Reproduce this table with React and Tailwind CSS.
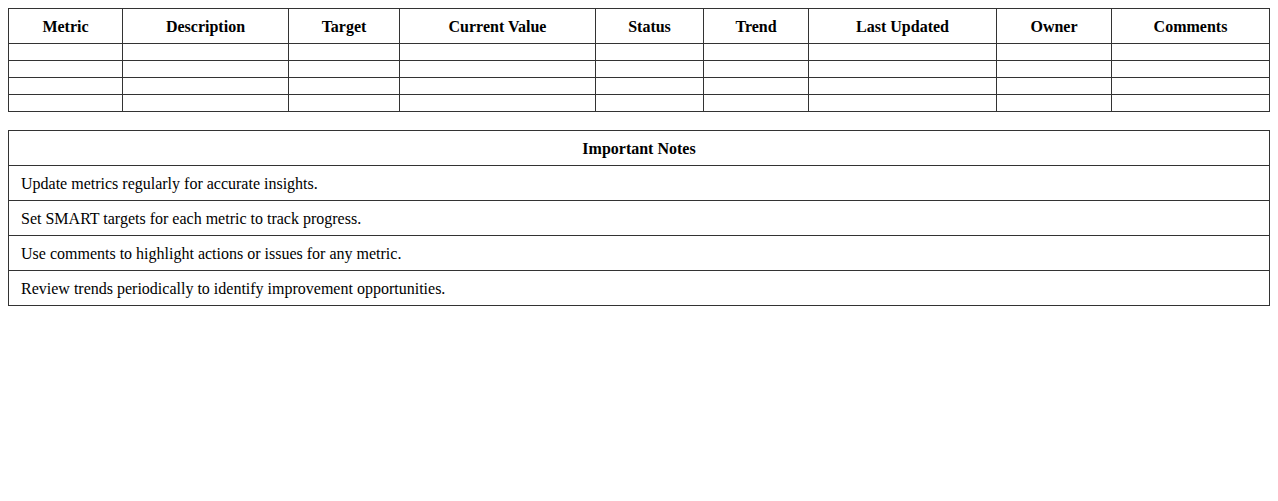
export default function App() {
  const cols = [
    ["Metric", "w-[114px]"],
    ["Description", "w-[166px]"],
    ["Target", "w-[111px]"],
    ["Current Value", "w-[196px]"],
    ["Status", "w-[108px]"],
    ["Trend", "w-[105px]"],
    ["Last Updated", "w-[188px]"],
    ["Owner", "w-[115px]"],
    ["Comments", "w-[158px]"],
  ];
  const notes = [
    "Update metrics regularly for accurate insights.",
    "Set SMART targets for each metric to track progress.",
    "Use comments to highlight actions or issues for any metric.",
    "Review trends periodically to identify improvement opportunities.",
  ];
  return (
    <div className="p-2 bg-white text-black text-[16px] leading-[18px] font-['Liberation_Serif','Times_New_Roman',serif]">
      <table className="w-full border-collapse table-fixed">
        <thead>
          <tr>
            {cols.map(([c, w]) => (
              <th key={c} className={`${w} border border-[#333] px-3 pt-[9px] pb-[7px] font-bold text-center`}>{c}</th>
            ))}
          </tr>
        </thead>
        <tbody>
          {[0, 1, 2, 3].map((r) => (
            <tr key={r}>
              {cols.map(([c]) => (
                <td key={c} className="border border-[#333] px-3 py-2"></td>
              ))}
            </tr>
          ))}
        </tbody>
      </table>
      <table className="w-full border-collapse mt-[18px]">
        <thead>
          <tr>
            <th className="border border-[#333] px-3 pt-[9px] pb-[7px] font-bold text-center">Important Notes</th>
          </tr>
        </thead>
        <tbody>
          {notes.map((n) => (
            <tr key={n}>
              <td className="border border-[#333] px-3 pt-[9px] pb-[7px] text-left">{n}</td>
            </tr>
          ))}
        </tbody>
      </table>
    </div>
  );
}
